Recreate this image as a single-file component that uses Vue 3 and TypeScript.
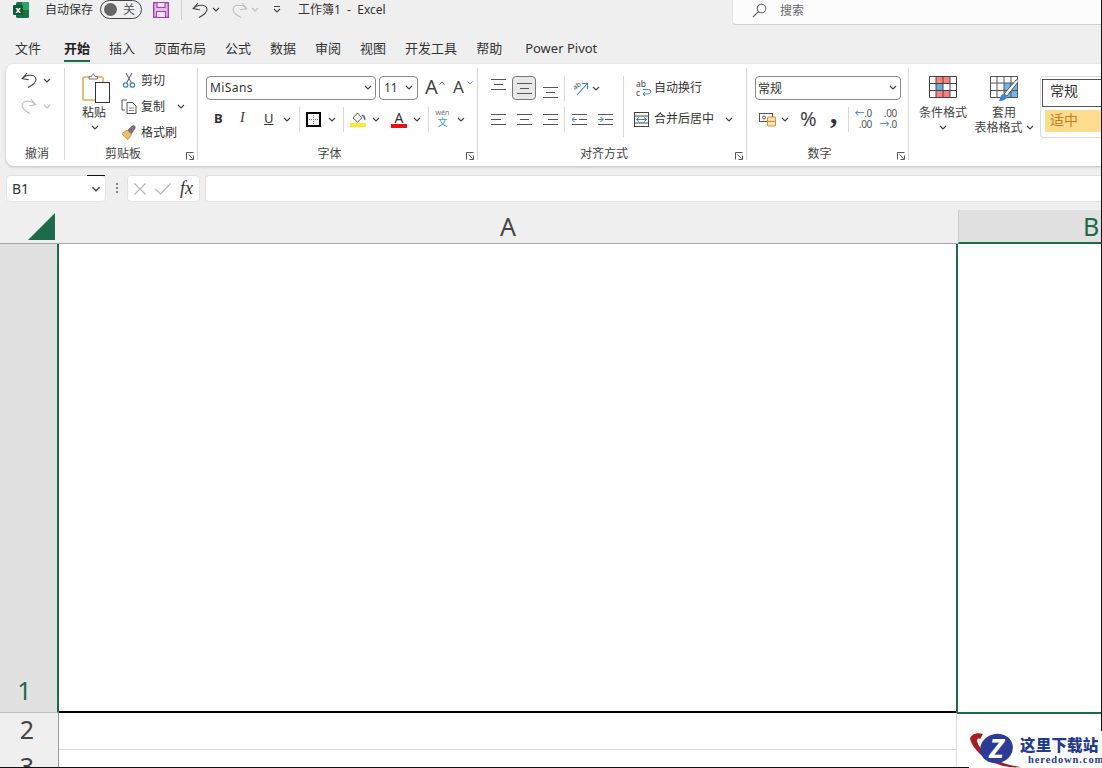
<script setup lang="ts">
const tabs: string[] = ['文件', '开始', '插入', '页面布局', '公式', '数据', '审阅', '视图', '开发工具', '帮助', 'Power Pivot']
</script>

<template>
  <div class="page">
    <svg class="defs" width="0" height="0">
      <symbol id="chev" viewBox="0 0 8 5"><path d="M1 1l3 3 3-3" fill="none" stroke="currentColor" stroke-width="1.2"/></symbol>
      <symbol id="undo" viewBox="0 0 16 16"><path d="M6 1L1.2 6.600l6.600 1.200M1.800 6.400C4.500 2.400 14.500 1.600 15 7.200c.3 3.400-3.800 6-8 8.300" fill="none" stroke="currentColor" stroke-width="1.1"/></symbol>
      <symbol id="launch" viewBox="0 0 8 8"><path d="M.5 7.5V.5h7M2.5 2.5l4 4M7.5 3.5v4h-4" fill="none" stroke="#555" stroke-width="1"/></symbol>
      <symbol id="lines" viewBox="0 0 15 11"><path d="M0 .5h15M3 5.500h9M0 10.500h15" fill="none" stroke="#555" stroke-width="1"/></symbol>
    </svg>

    <div class="title">
      <div class="tc"><svg class="ico16" viewBox="0 0 16 16"><rect x="3" y="0" width="13" height="16" rx="1.500" fill="#1d7044"/><rect x="9" y="0" width="7" height="8" fill="#2ba36a"/><rect x="0" y="3" width="10" height="10" rx="1" fill="#0f5a32"/><text x="5" y="11" text-anchor="middle" font-size="9" font-weight="700" fill="#fff">x</text></svg></div>
      <div class="tc">自动保存</div>
      <div class="tc"><div class="toggle"><span class="knob"></span><span>关</span></div></div>
      <div class="tc"><svg class="ico16" viewBox="0 0 16 16"><rect x=".7" y=".7" width="14.600" height="14.600" fill="#e6bcec" stroke="#a83fb8" stroke-width="1.400"/><path d="M4 1v4.500h8V1M3.500 15V9.500h9V15" fill="#f6e6f8" stroke="#a83fb8" stroke-width="1.200"/></svg></div>
      <div class="tc"><span class="tsep"></span></div>
      <div class="tc"><svg class="ico16 ink"><use href="#undo"/></svg></div>
      <div class="tc"><svg class="chev ink"><use href="#chev"/></svg></div>
      <div class="tc"><svg class="ico16 dim flip"><use href="#undo"/></svg></div>
      <div class="tc"><svg class="chev dim"><use href="#chev"/></svg></div>
      <div class="tc"><svg class="qat" viewBox="0 0 8 7"><path d="M1 .5h6M1 3l3 3 3-3" fill="none" stroke="#444" stroke-width="1.100"/></svg></div>
      <div class="tc doc">工作簿1&nbsp; -&nbsp; Excel</div>
      <div class="search">
        <svg class="ico15" viewBox="0 0 15 15"><circle cx="9.500" cy="5.500" r="4.300" fill="none" stroke="#666" stroke-width="1.100"/><path d="M6.300 8.700L1 14" stroke="#666" stroke-width="1.200"/></svg>
        <span>搜索</span>
      </div>
    </div>

    <div class="tabs">
      <div v-for="t in tabs" :key="t" class="tab" :class="{ on: t === '开始', pp: t === 'Power Pivot' }">{{ t }}</div>
    </div>

    <div class="ribbon">
      <section class="grp g1">
        <div class="body rows3">
          <div class="r3"><svg class="ico16 ink"><use href="#undo"/></svg><svg class="chev ink"><use href="#chev"/></svg></div>
          <div class="r3"><svg class="ico16 dim flip"><use href="#undo"/></svg><svg class="chev dim"><use href="#chev"/></svg></div>
        </div>
        <div class="label plain">撤消</div>
      </section>

      <section class="grp g2">
        <div class="body split">
          <div class="paste">
            <svg class="pasteico" viewBox="0 0 28 30"><rect x="1" y="4" width="20" height="23" rx="1.500" fill="#fff" stroke="#e3ac55" stroke-width="1.600"/><path d="M7 6V3.500h2.500C10 .5 12.500.5 13 3.500h2.500V6z" fill="#f4f4f4" stroke="#777"/><rect x="13.500" y="9.500" width="14" height="20" fill="#fff" stroke="#333"/></svg>
            <div class="ptext">粘贴</div>
            <svg class="chev ink"><use href="#chev"/></svg>
          </div>
          <div class="clip">
            <div class="cl"><span class="clicon"><svg class="ico16" viewBox="0 0 16 16"><path d="M5 1l5.500 10M11 1L5.500 11" stroke="#666" stroke-width="1.100"/><circle cx="4.600" cy="13" r="2.200" fill="none" stroke="#3b86c8" stroke-width="1.300"/><circle cx="11.400" cy="13" r="2.200" fill="none" stroke="#3b86c8" stroke-width="1.300"/></svg></span><span>剪切</span></div>
            <div class="cl"><span class="clicon"><svg class="ico16" viewBox="0 0 16 16"><path d="M6 2H1v10h3" fill="none" stroke="#555"/><path d="M6 4.500h5.500L15 8v7.500H6z" fill="#fff" stroke="#555"/><path d="M8 10h5M8 12.500h5" stroke="#888"/></svg></span><span>复制</span><svg class="chev ink cchev"><use href="#chev"/></svg></div>
            <div class="cl"><span class="clicon"><svg class="ico16" viewBox="0 0 16 16"><path d="M1 9.500l5-3.500 4.500 4.500-3.500 5C5 14.500 2 11.500 1 9.500z" fill="#f0bd6b" stroke="#c98a2c" stroke-width=".8"/><path d="M7 6l4-4c2-1.500 4 .5 3 2.500l-3.500 5z" fill="#777" stroke="#555" stroke-width=".6"/></svg></span><span>格式刷</span></div>
          </div>
        </div>
        <div class="label">剪贴板</div>
        <svg class="launch"><use href="#launch"/></svg>
      </section>

      <section class="grp g3">
        <div class="body">
          <div class="fr1">
            <div class="box fontbox"><span>MiSans</span><svg class="chev ink"><use href="#chev"/></svg></div>
            <div class="box sizebox"><span>11</span><svg class="chev ink"><use href="#chev"/></svg></div>
            <div class="bigA a1">A<svg class="mini" viewBox="0 0 6 4"><path d="M.5 3.500L3 1l2.500 2.500" fill="none" stroke="#555"/></svg></div>
            <div class="bigA a2">A<svg class="mini" viewBox="0 0 6 4"><path d="M.5.500L3 3 5.500.500" fill="none" stroke="#4a8fcb"/></svg></div>
          </div>
          <div class="fr2">
            <b class="fmt">B</b><i class="fmt ser">I</i><u class="fmt">U</u>
            <svg class="chev ink"><use href="#chev"/></svg><span class="vs"></span>
            <svg class="ico15" viewBox="0 0 15 15"><rect x="1" y="1" width="13" height="13" fill="#fff" stroke="#000" stroke-width="2"/><path d="M7.500 3v9M3 7.500h9" stroke="#777" stroke-dasharray="1 1"/></svg>
            <svg class="chev ink"><use href="#chev"/></svg><span class="vs"></span>
            <svg class="ico16" viewBox="0 0 16 16"><path d="M3 7l4.500-5L12 7l-4.500 4z" fill="#fff" stroke="#555"/><path d="M12 4c2 1 3 3 2.500 5" fill="none" stroke="#2c6fb0" stroke-width="1.500"/><rect y="12" width="16" height="4" fill="#ffe92e"/></svg>
            <svg class="chev ink"><use href="#chev"/></svg>
            <div class="colorA">A<span class="redbar"></span></div>
            <svg class="chev ink"><use href="#chev"/></svg><span class="vs"></span>
            <div class="wen"><span class="wt">wén</span><span class="wb">文</span></div>
            <svg class="chev ink"><use href="#chev"/></svg>
          </div>
        </div>
        <div class="label">字体</div>
        <svg class="launch"><use href="#launch"/></svg>
      </section>

      <section class="grp g4">
        <div class="body">
          <div class="ar1">
            <svg class="al" viewBox="0 0 15 11"><use href="#lines"/></svg>
            <div class="hl"><svg class="al" viewBox="0 0 15 11"><use href="#lines"/></svg></div>
            <svg class="al albot" viewBox="0 0 15 11"><use href="#lines"/></svg>
            <span class="vs"></span>
            <svg class="orient" viewBox="0 0 18 18"><text x="2" y="9" font-size="7" fill="#444" transform="rotate(-35 6 7)">ab</text><path d="M6 16L16 5M11 4.500h5.500V10" fill="none" stroke="#3b86c8" stroke-width="1.100"/></svg>
            <svg class="chev ink"><use href="#chev"/></svg>
            <span class="vs"></span>
            <svg class="wrapico" viewBox="0 0 16 18"><text x="0" y="8" font-size="8.500" fill="#444">ab</text><text x="0" y="16.500" font-size="8.500" fill="#444">c</text><path d="M7 10.500h5.500c3.200 0 3.200 4.500-1 4.500H7M9 13l-2 2 2 2" fill="none" stroke="#3b86c8" stroke-width="1"/></svg>
            <span class="txt">自动换行</span>
          </div>
          <div class="ar2">
            <svg class="al" viewBox="0 0 15 11"><path d="M0 .5h15M0 5.500h10M0 10.500h15" stroke="#555"/></svg>
            <svg class="al" viewBox="0 0 15 11"><path d="M0 .5h15M3 5.500h9M0 10.500h15" stroke="#555"/></svg>
            <svg class="al" viewBox="0 0 15 11"><path d="M0 .5h15M5 5.500h10M0 10.500h15" stroke="#555"/></svg>
            <span class="vs"></span>
            <svg class="al" viewBox="0 0 15 11"><path d="M0 .5h15M7 5.500h8M0 10.500h15" stroke="#555"/><path d="M5 5.500H0M2.500 3L0 5.500 2.500 8" fill="none" stroke="#3b86c8"/></svg>
            <svg class="al" viewBox="0 0 15 11"><path d="M0 .5h15M7 5.500h8M0 10.500h15" stroke="#555"/><path d="M0 5.500h5M2.500 3L5 5.500 2.500 8" fill="none" stroke="#3b86c8"/></svg>
            <span class="vs long"></span>
            <svg class="ico15" viewBox="0 0 15 15"><rect x=".5" y=".5" width="14" height="14" fill="#fff" stroke="#444"/><path d="M.5 4h14M.5 11h14" stroke="#444"/><path d="M2.500 7.500h10M5 5.500l-2.500 2 2.500 2M10 5.500l2.500 2-2.500 2" fill="none" stroke="#2c7fc0"/></svg>
            <span class="txt">合并后居中</span>
            <svg class="chev ink"><use href="#chev"/></svg>
          </div>
        </div>
        <div class="label">对齐方式</div>
        <svg class="launch"><use href="#launch"/></svg>
      </section>

      <section class="grp g5">
        <div class="body">
          <div class="box numbox"><span>常规</span><svg class="chev ink"><use href="#chev"/></svg></div>
          <div class="nr2">
            <svg class="cur" viewBox="0 0 18 16"><rect x=".5" y="2.500" width="13" height="8" fill="#fff" stroke="#555"/><circle cx="5" cy="6.500" r="1.500" fill="none" stroke="#555"/><rect x="8.500" y="6" width="8" height="9" rx="1" fill="#fbe3bd" stroke="#d98e2a"/><path d="M8.500 10.500h8" stroke="#d98e2a"/></svg>
            <svg class="chev ink"><use href="#chev"/></svg>
            <span class="pct">%</span>
            <span class="comma">,</span>
            <span class="vs"></span>
            <div class="dec"><span><em>←</em>.0</span><span>.00</span></div>
            <div class="dec"><span>.00</span><span><em>→</em>.0</span></div>
          </div>
        </div>
        <div class="label">数字</div>
        <svg class="launch"><use href="#launch"/></svg>
      </section>

      <section class="g6">
        <div class="bigbtn cond">
          <svg class="tbl" viewBox="0 0 28 22"><rect x="7" y=".5" width="14" height="7" fill="#f9837c"/><rect x="7" y="7.500" width="7" height="7" fill="#6ba9df"/><rect x="7" y="14.500" width="14" height="7" fill="#f9837c"/><path d="M.5.500h27v21H.5zM7 .5v21M14 .5v21M21 .5v21M.5 7.500h27M.5 14.500h27" fill="none" stroke="#444" stroke-width="1"/></svg>
          <div class="bt">条件格式</div>
          <svg class="chev ink"><use href="#chev"/></svg>
        </div>
        <div class="bigbtn table">
          <svg class="tbl" viewBox="0 0 28 26"><rect x="14" y="7" width="14" height="15" fill="#6db5ee"/><path d="M.5.500h27v21H.5zM7 .5v21M14 .5v21M21 .5v21M.5 7h27M.5 14.500h27" fill="none" stroke="#555" stroke-width="1"/><path d="M14 18L26 4c1.500-1 3 .5 2 2L17 20z" fill="#fff" stroke="#555"/><path d="M9 25c1-1 .5-5 4-7l4 3c-1 3-5 4.500-8 4z" fill="#3b86c8"/></svg>
          <div class="bt">套用</div>
          <div class="bt">表格格式 <svg class="chev ink"><use href="#chev"/></svg></div>
        </div>
        <div class="gallery">
          <div class="st normal">常规</div>
          <div class="st neutral">适中</div>
        </div>
      </section>
    </div>

    <div class="fbar">
      <div class="namebox"><span>B1</span><span class="topmark"></span><svg class="chev2 ink"><use href="#chev"/></svg></div>
      <div class="dots"></div>
      <div class="fnbox">
        <svg class="x" viewBox="0 0 12 12"><path d="M.5.500l11 11M11.500.500l-11 11" stroke="#b5b5b5" stroke-width="1.200"/></svg>
        <svg class="chk" viewBox="0 0 16 12"><path d="M.5 6l5 5L15.500.5" fill="none" stroke="#b5b5b5" stroke-width="1.200"/></svg>
        <span class="fx">fx</span>
      </div>
      <div class="finput"></div>
    </div>

    <div class="sheet">
      <div class="colhead">
        <div class="corner"><svg class="tri" viewBox="0 0 27 27"><path d="M27 0v27H0z" fill="#1e6b4b"/></svg></div>
        <div class="ca">A</div>
        <div class="cb">B</div>
      </div>
      <div class="rowx r1">
        <div class="rh sel">1</div>
        <div class="cellA first"></div>
        <div class="cellB"></div>
      </div>
      <div class="rowx r2">
        <div class="rh">2</div>
        <div class="cellA"></div>
        <div class="cellN"></div>
      </div>
      <div class="rowx r2">
        <div class="rh">3</div>
        <div class="cellA"></div>
        <div class="cellN"></div>
      </div>
    </div>

    <span class="edge-r"></span>
    <span class="edge-b"></span>

    <div class="mark">
      <svg class="logo" viewBox="0 0 54 36">
        <path d="M1 7C2 2 8 0 14 2l-3 5C9 6 8 7 8 9c3 12 22 24 45 26C30 38 6 24 1 7z" fill="#a51d22"/>
        <ellipse cx="27.500" cy="16.500" rx="16.500" ry="14.500" transform="rotate(-15 27.500 16.500)" fill="#2c3c96"/>
        <text x="27.500" y="26" text-anchor="middle" font-size="27" font-weight="700" font-style="italic" fill="#fff">Z</text>
      </svg>
      <div class="mt"><div class="m1">这里下载站</div><div class="m2">heredown.com</div></div>
    </div>
  </div>
</template>

<style>
html, body { margin: 0; padding: 0; }
</style>

<style scoped>
.page {
  position: relative; width: 1102px; height: 768px; overflow: hidden; background: #efefef;
  display: flex; flex-direction: column; color: #333; font-size: 12px;
  font-family: "Noto Sans", "Noto Sans CJK SC", sans-serif;
}
.defs { position: absolute; }
svg { display: block; flex: none; }
.ink { color: #444; }
.dim { color: #bdbdbd; }
.flip { transform: scaleX(-1); }
.chev { width: 8px; height: 5px; }
.ico16 { width: 16px; height: 16px; }
.ico15 { width: 15px; height: 15px; }

.title {
  height: 26px; box-sizing: border-box; padding-left: 13px; flex: none;
  display: grid; align-items: start;
  grid-template-columns: 32px 55px 53px 28px 11px 20px 20px 19px 22px 25px 434px 370px;
}
.tc { height: 19px; display: flex; align-items: center; line-height: 19px; white-space: nowrap; }
.toggle {
  box-sizing: border-box; width: 42px; height: 19px; border: 1px solid #444; border-radius: 10px;
  display: flex; align-items: center; justify-content: space-between; padding: 0 6px 0 3px; font-size: 12px; color: #555;
}
.knob { width: 13px; height: 13px; border-radius: 50%; background: #666; }
.tsep { width: 1px; height: 20px; background: #d2d2d2; }
.qat { width: 8px; height: 7px; margin-left: 0; }
.search {
  height: 25px; background: #fcfcfc; border-bottom: 1px solid #d2d2d2; border-left: 1px solid #e4e4e4; border-radius: 0 0 0 4px;
  display: flex; align-items: center; gap: 13px; padding-left: 19px; padding-bottom: 4px; box-sizing: border-box; color: #666;
}

.tabs { height: 38px; box-sizing: border-box; padding: 13px 0 0 15px; display: flex; gap: 19px; flex: none; font-size: 13px; }
.tab { height: 23px; box-sizing: border-box; line-height: 18px; white-space: nowrap; }
.tab.on { font-weight: 700; border-bottom: 2px solid #1e6b4b; margin-left: 4px; width: 26px; color: #222; }
.tab.pp { margin-left: 4px; }

.ribbon {
  flex: none; height: 102px; margin-left: 6px; display: flex; background: #fff; border-radius: 8px 0 0 8px;
  box-shadow: 0 1px 3px rgba(0, 0, 0, .22);
}
.grp { position: relative; box-sizing: border-box; flex: none; }
.grp::after { content: ""; position: absolute; right: 0; top: 4px; bottom: 6px; width: 1px; background: #d8d8d8; }
.g1 { width: 59px; }
.g2 { width: 133px; }
.g3 { width: 280px; }
.g4 { width: 269px; }
.g5 { width: 162px; }
.body { height: 82px; box-sizing: border-box; padding-top: 12px; }
.label { height: 14px; line-height: 14px; margin-top: 1px; text-align: center; padding-right: 17px; color: #444; }
.label.plain { padding: 0 0 0 3px; }
.launch { position: absolute; right: 4px; top: 88px; width: 8px; height: 8px; }

.rows3 { padding-top: 3px; }
.r3 { height: 26px; display: flex; align-items: center; padding-left: 15px; gap: 6px; }
.split { display: flex; padding: 0 0 0 17px; }
.paste { width: 39px; padding-top: 9px; display: flex; flex-direction: column; }
.pasteico { width: 28px; height: 30px; }
.ptext { width: 24px; text-align: center; line-height: 14px; margin-top: 3px; }
.paste .chev { margin: 5px 0 0 9px; }
.clip { padding-top: 3px; }
.cl { height: 26px; display: flex; align-items: center; width: 68px; position: relative; }
.clicon { width: 20px; }
.cchev { margin-left: 12px; }

.fr1 { display: flex; align-items: center; padding-left: 8px; height: 24px; }
.box {
  box-sizing: border-box; height: 24px; background: #fff; border: 1px solid #8a8a8a; border-radius: 4px;
  display: flex; align-items: center; justify-content: space-between; padding: 0 3px 1px 3px; color: #333;
}
.fontbox { width: 170px; letter-spacing: .4px; }
.sizebox { width: 39px; margin-left: 3px; padding-left: 4px; padding-right: 4px; }
.bigA { font-size: 20px; line-height: 22px; height: 24px; color: #444; position: relative; width: 15px; }
.a1 { margin-left: 7px; }
.a2 { margin-left: 13px; font-size: 17px; }
.mini { position: absolute; right: -5px; top: 5px; width: 6px; height: 4px; }
.fr2 {
  display: grid; align-items: center; justify-items: start; margin: 7px 0 0 16px; height: 24px;
  grid-template-columns: 26px 24px 19px 16px 7px 22px 15px 7px 22px 19px 22px 15px 7px 22px 8px;
  grid-template-rows: 24px;
}
.fmt { font-size: 13px; line-height: 22px; height: 24px; color: #333; }
.ser { font-family: "Liberation Serif", serif; font-size: 14px; }
.vs { width: 1px; height: 25px; background: #d8d8d8; }
.colorA { width: 16px; text-align: center; font-size: 14px; line-height: 13px; color: #333; position: relative; height: 17px; }
.redbar { position: absolute; left: 0; bottom: 0; width: 16px; height: 4px; background: #e8120e; }
.wen { width: 15px; display: flex; flex-direction: column; align-items: center; margin-top: -2px; }
.wt { font-size: 7px; line-height: 8px; color: #777; }
.wb { font-size: 10px; line-height: 10px; color: #4a9bd8; }

.ar1, .ar2 { display: grid; align-items: center; justify-items: start; margin-left: 13px; height: 24px; grid-template-rows: 24px; }
.ar1 { grid-template-columns: 21px 31px 21px 7px 21px 31px 11px 20px auto; }
.ar2 { margin-top: 7px; grid-template-columns: 26px 26px 21px 8px 26px 25px 11px 20px 71px 8px; }
.al { width: 15px; height: 11px; }
.ar1 > .al:first-child { margin-top: -8px; }
.albot { margin-top: 8px; }
.hl {
  box-sizing: border-box; width: 24px; height: 24px; background: #e8e8e8; border: 1px solid #777; border-radius: 4px;
  display: flex; align-items: center; justify-content: center;
}
.orient { width: 18px; height: 18px; overflow: visible; }
.wrapico { width: 16px; height: 18px; margin-left: 2px; overflow: visible; }
.long { height: 37px; align-self: start; margin-top: -7px; }
.txt { white-space: nowrap; line-height: 24px; height: 24px; }

.numbox { width: 146px; margin-left: 8px; padding-left: 2px; }
.nr2 {
  display: grid; align-items: center; justify-items: start; margin: 7px 0 0 12px; height: 24px;
  grid-template-columns: 22px 19px 30px 18px 7px 25px 18px;
  grid-template-rows: 24px;
}
.cur { width: 18px; height: 16px; }
.pct { font-size: 20px; line-height: 24px; color: #444; }
.comma { font-family: "Liberation Serif", serif; font-weight: 700; font-size: 30px; line-height: 24px; height: 24px; margin-top: -12px; color: #333; }
.dec { display: flex; flex-direction: column; font-size: 10px; line-height: 11px; color: #555; align-items: flex-end; width: 17px; white-space: nowrap; letter-spacing: -.3px; }
.dec em { font-style: normal; color: #3b86c8; }

.g6 { flex: 1; display: flex; padding: 12px 0 0 6px; min-width: 0; }
.bigbtn { display: flex; flex-direction: column; align-items: center; color: #444; line-height: 15px; }
.cond { width: 56px; }
.table { width: 66px; }
.tbl { width: 28px; height: 22px; margin-bottom: 7px; }
.table .tbl { height: 26px; margin-bottom: 3px; }
.bigbtn > .chev { margin-top: 5px; }
.bt { white-space: nowrap; display: flex; align-items: center; gap: 3px; height: 15px; }
.gallery {
  flex: 1; height: 62px; margin-left: 3px; box-sizing: border-box; border: 1px solid #ddd; border-right: 0; border-radius: 4px 0 0 4px;
  padding: 2px 0 0 1px; font-size: 14px;
}
.st { white-space: nowrap; }
.normal { height: 28px; box-sizing: border-box; border: 1px solid #555; border-right: 0; line-height: 22px; padding-left: 7px; color: #333; }
.neutral { height: 22px; margin: 3px 0 0 3px; background: #fddc8e; color: #c77b18; line-height: 19px; padding-left: 5px; }

.fbar { flex: none; height: 27px; margin: 9px 0 8px 6px; display: flex; }
.namebox {
  position: relative; box-sizing: border-box; width: 100px; background: #fff; border: 1px solid #e2e2e2; border-radius: 4px;
  font-size: 14px; line-height: 25px; padding-left: 5px; color: #333;
}
.topmark { position: absolute; left: 80px; top: -1px; width: 18px; height: 1px; background: #111; }
.chev2 { position: absolute; right: 4px; top: 10px; width: 10px; height: 6px; }
.dots { width: 2px; height: 10px; margin: 8px 10px 0 10px; background: repeating-linear-gradient(#888 0 2px, transparent 2px 4px); }
.fnbox {
  box-sizing: border-box; width: 73px; background: #fff; border: 1px solid #e2e2e2; border-radius: 4px;
  display: flex; align-items: center; padding-left: 6px; margin-left: -1px;
}
.x { width: 12px; height: 12px; }
.chk { width: 16px; height: 12px; margin-left: 9px; }
.fx { font-family: "Liberation Serif", serif; font-style: italic; font-size: 18px; margin-left: 9px; color: #333; }
.finput { flex: 1; margin-left: 5px; background: #fff; border: 1px solid #e2e2e2; border-right: 0; border-radius: 4px 0 0 4px; }

.sheet { flex: 1; min-height: 0; background: #fff; overflow: hidden; }
.colhead { height: 34px; display: flex; background: #efefef; font-size: 25px; line-height: 32px; }
.corner { width: 58px; box-sizing: border-box; border-bottom: 1px solid #a8a8a8; padding: 3px 0 0 28px; }
.tri { width: 27px; height: 27px; }
.ca { box-sizing: border-box; width: 900px; text-align: center; color: #444; border-bottom: 1px solid #a8a8a8; }
.cb {
  flex: 1; box-sizing: border-box; background: #e1e1e1; border-left: 1px solid #c8c8c8; border-bottom: 2px solid #1e6b4b;
  color: #1e6b4b; padding-left: 124px; overflow: hidden;
}
.rowx { display: flex; }
.r1 { height: 469px; }
.r2 { height: 37px; }
.rh {
  box-sizing: border-box; width: 59px; flex: none; background: #efefef; border-right: 1px solid #9a9a9a; text-align: center;
  font-size: 25px; line-height: 33px; color: #444; padding-right: 4px;
}
.rh.sel {
  background: #e1e1e1; border-right: 2px solid #1e6b4b; color: #1e6b4b; line-height: 25px;
  padding: 434px 8px 0 0; border-bottom: 1px solid #c0c0c0;
}
.cellA { box-sizing: border-box; width: 898px; flex: none; border-bottom: 1px solid #dcdcdc; border-right: 1px solid #dcdcdc; }
.cellA.first { width: 897px; border-right: 0; border-bottom: 2px solid #000; }
.cellB { box-sizing: border-box; flex: 1; height: 470px; border-left: 2px solid #1e6b4b; border-bottom: 2px solid #1e6b4b; }
.cellN { flex: 1; }

.edge-r { position: absolute; right: 0; top: 0; width: 1px; height: 731px; background: #111; }
.edge-b { position: absolute; left: 0; bottom: 0; width: 969px; height: 1px; background: #111; }
.mark {
  position: absolute; left: 969px; top: 732px; right: 0; bottom: 0; background: #fff;
  display: flex; align-items: flex-start;
}
.logo { width: 54px; height: 36px; flex: none; }
.mt { margin-left: -3px; font-family: "Liberation Serif", serif; font-weight: 700; color: #243a8e; }
.m1 { font-size: 15.500px; line-height: 20px; margin-top: 2px; letter-spacing: .2px; white-space: nowrap; font-family: "Noto Sans CJK SC", sans-serif; font-weight: 900; }
.m2 { font-size: 10.500px; line-height: 12px; letter-spacing: .9px; margin-left: 8px; white-space: nowrap; }
</style>
